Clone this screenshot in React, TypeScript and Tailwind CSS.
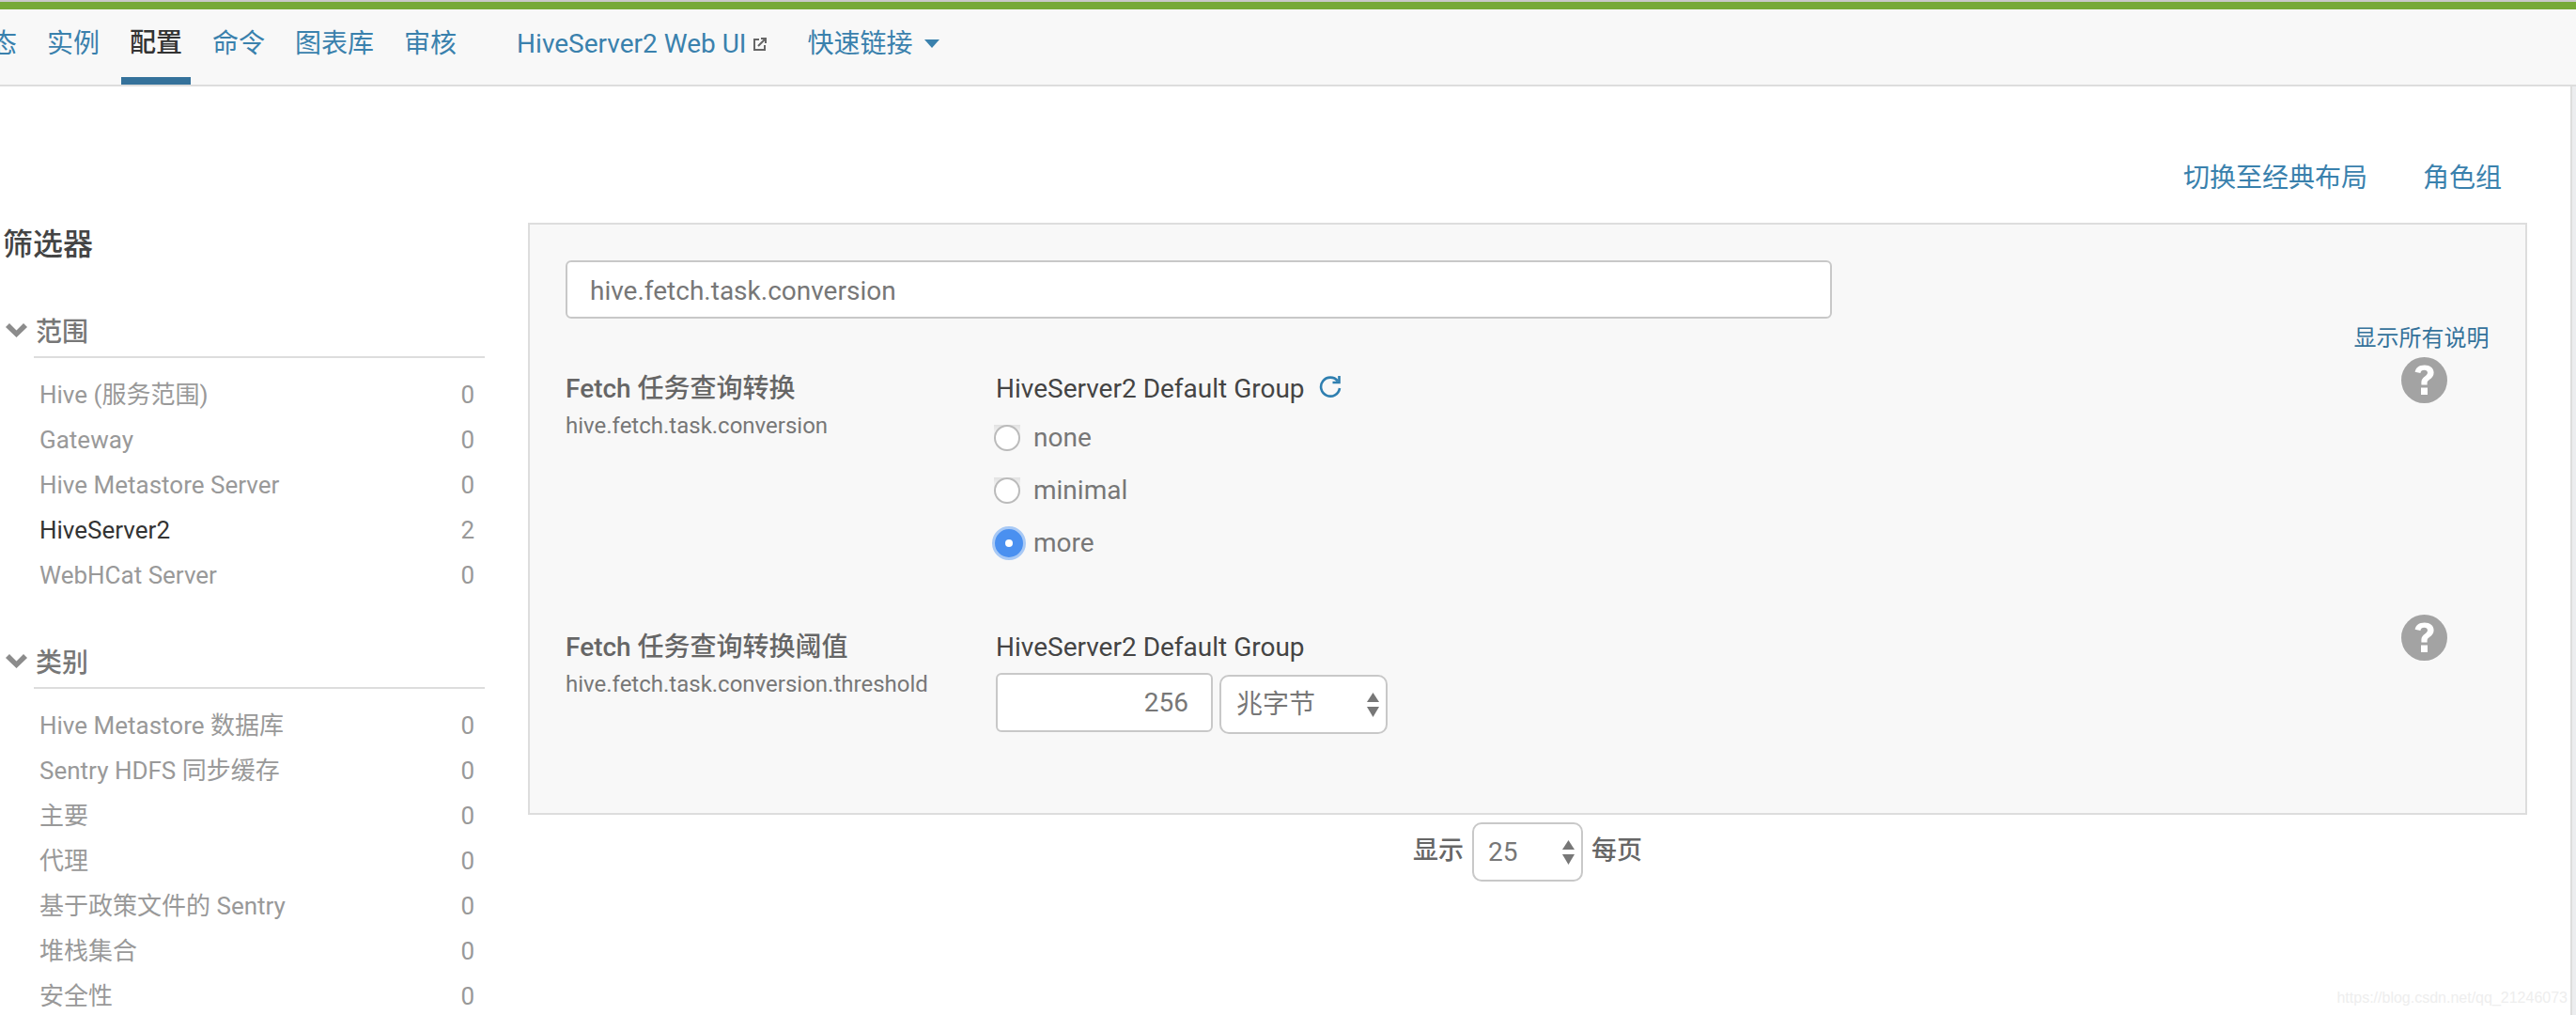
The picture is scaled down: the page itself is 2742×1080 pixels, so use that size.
const scopes: [string, number][] = [
  ["Hive (服务范围)", 0],
  ["Gateway", 0],
  ["Hive Metastore Server", 0],
  ["HiveServer2", 2],
  ["WebHCat Server", 0],
];

const categories: [string, number][] = [
  ["Hive Metastore 数据库", 0],
  ["Sentry HDFS 同步缓存", 0],
  ["主要", 0],
  ["代理", 0],
  ["基于政策文件的 Sentry", 0],
  ["堆栈集合", 0],
  ["安全性", 0],
];

function FilterGroup({ title, items, className }: { title: string; items: [string, number][]; className: string }) {
  return (
    <div className={className}>
      <div className="flex">
        <svg viewBox="0 0 23 15" className="mt-[12px] mr-[7px] h-[15px] w-[23px] shrink-0 fill-[#8c8c8c]">
          <path d="M0 4 L4 0 L11.5 7.5 L19 0 L23 4 L11.5 15 Z" />
        </svg>
        <div className="h-[49px] flex-1 border-b-2 border-[#dddddd] pt-[2px] pl-[2px] text-[28px] leading-[40px] font-medium text-[#777777]">
          {title}
        </div>
      </div>
      <div className="mt-[14px]">
        {items.map(([name, count]) => (
          <div
            key={name}
            className={`flex h-[48px] items-center justify-between pt-[3px] pr-[11px] pl-[36px] text-[26px] ${
              count > 0 ? "text-[#333333]" : "text-[#999999]"
            }`}
          >
            <span>{name}</span>
            <span className="text-[#999999]">{count}</span>
          </div>
        ))}
      </div>
    </div>
  );
}

function SelectArrows() {
  return (
    <svg width="13" height="26" viewBox="0 0 13 26" className="shrink-0 fill-[#777777]">
      <path d="M6.5 0 L13 10 L0 10 Z" />
      <path d="M6.5 26 L13 15 L0 15 Z" />
    </svg>
  );
}

function Radio({ label, checked }: { label: string; checked?: boolean }) {
  return (
    <div className="flex h-[56px] items-center">
      {checked ? (
        <span className="-ml-[4px] mr-[8px] flex h-[36px] w-[36px] shrink-0 items-center justify-center rounded-full border-[3px] border-[#a8c9f5] bg-[#4a90f0]">
          <span className="h-[8px] w-[8px] rounded-full bg-white" />
        </span>
      ) : (
        <span className="-ml-[2px] mr-[14px] h-[28px] w-[28px] shrink-0 bg-[linear-gradient(#e2e2e2,#f8f8f8_40%)]">
          <span className="block h-full w-full rounded-full border-2 border-[#bbbbbb] bg-white" />
        </span>
      )}
      <span className="text-[28px] text-[#777777]">{label}</span>
    </div>
  );
}

function HelpIcon() {
  return (
    <svg viewBox="0 0 49 49" className="h-[49px] w-[49px]">
      <circle cx="24.5" cy="24.5" r="24.5" fill="#a3a3a3" />
      <path
        d="M24.8 8.5 C18.8 8.5 15.4 11.3 14.6 15.8 L20.4 17 C20.8 14.8 22.1 13.7 24.4 13.7 C26.6 13.7 28 14.8 28 16.6 C28 18.2 27 19.1 25.2 20.4 C22.9 22 21.4 23.8 21.4 26.8 V29.5 H27.6 V27.6 C27.6 25.9 28.4 25 30.2 23.7 C32.6 22 34.6 20.2 34.6 16.5 C34.6 11.6 30.6 8.5 24.8 8.5 Z"
        fill="#ffffff"
      />
      <rect x="21" y="32.5" width="7" height="7.5" fill="#ffffff" />
    </svg>
  );
}

export default function App() {
  return (
    <div className="relative flex h-[1080px] w-full flex-col overflow-hidden bg-white font-['Roboto','Noto_Sans_CJK_SC',sans-serif]">
      <div className="h-[2px] shrink-0 bg-[#c9c9c9]" />
      <div className="h-[8px] shrink-0 bg-[#76a937]" />
      <nav className="flex h-[82px] shrink-0 gap-[32px] border-b-2 border-[#dddddd] bg-[#f8f8f8] text-[28px] text-[#3a81ad]">
        <div className="-ml-[38px] flex h-[80px] items-center pb-[7px]">状态</div>
        <div className="flex h-[80px] items-center pb-[7px]">实例</div>
        <div className="-mx-[9px] flex h-[80px] items-center border-b-8 border-[#35729b] px-[9px] font-medium text-[#333333]">
          配置
        </div>
        <div className="flex h-[80px] items-center pb-[7px]">命令</div>
        <div className="flex h-[80px] items-center pb-[7px]">图表库</div>
        <div className="flex h-[80px] items-center pb-[7px]">审核</div>
        <div className="ml-[32px] flex h-[80px] items-center pb-[7px]">
          HiveServer2 Web UI
          <svg viewBox="0 0 16 16" className="ml-[7px] h-[16px] w-[16px] fill-none stroke-[#666666] stroke-2">
            <path d="M7 3 H2 V14 H13 V9" />
            <path d="M6 10 L14 2 M9 2 H14 V7" />
          </svg>
        </div>
        <div className="ml-[10px] flex h-[80px] items-center pb-[7px]">
          快速链接
          <svg viewBox="0 0 16 9" className="ml-[13px] h-[9px] w-[16px] fill-[#3a81ad]">
            <path d="M0 0 H16 L8 9 Z" />
          </svg>
        </div>
      </nav>

      <div className="flex min-h-0 flex-1">
        <div className="flex min-w-0 flex-1">
          <aside className="w-[562px] shrink-0 pt-[148px] pl-[3px]">
            <h2 className="text-[32px] leading-[40px] font-medium text-[#444444]">筛选器</h2>
            <div className="w-[513px]">
              <FilterGroup title="范围" items={scopes} className="mt-[52px] pl-[3px]" />
              <FilterGroup title="类别" items={categories} className="mt-[49px] pl-[3px]" />
            </div>
          </aside>

          <main className="min-w-0 flex-1 pr-[46px]">
            <div className="flex h-[145px] justify-end gap-[59px] pt-[78px] pr-[27px] text-[28px] leading-[40px] text-[#3a81ad]">
              <span>切换至经典布局</span>
              <span>角色组</span>
            </div>

            <section className="h-[630px] border-2 border-[#dddddd] bg-[#f8f8f8] pt-[38px] pl-[38px]">
              <div className="flex h-[62px] w-[1348px] items-center rounded-[6px] border-2 border-[#c8c8c8] bg-white pt-[4px] pl-[24px] text-[28px] text-[#777777]">
                hive.fetch.task.conversion
              </div>

              <div className="flex items-start pr-[28px]">
                <div className="w-[458px] shrink-0 pt-[55px]">
                  <div className="text-[28px] leading-[40px] font-medium text-[#666666]">Fetch 任务查询转换</div>
                  <div className="mt-[3px] text-[24px] leading-[32px] text-[#777777]">hive.fetch.task.conversion</div>
                </div>
                <div className="flex-1 pt-[55px]">
                  <div className="flex items-center text-[28px] leading-[40px] text-[#444444]">
                    HiveServer2 Default Group
                    <svg viewBox="0 0 24 24" className="mb-[6px] ml-[15px] h-[24px] w-[24px] fill-none stroke-[#2f7fb0] stroke-[2.6]">
                      <path d="M20 6.5 A10 10 0 1 0 22 14" />
                      <path d="M21.5 1 V8 H14.5" />
                    </svg>
                  </div>
                  <div className="mt-[4px]">
                    <Radio label="none" />
                    <Radio label="minimal" />
                    <Radio label="more" checked />
                  </div>
                </div>
                <div className="flex w-[160px] shrink-0 flex-col items-center">
                  <div className="mr-[5px] pt-[1px] text-[24px] leading-[40px] text-[#35729b]">显示所有说明</div>
                  <HelpIcon />
                </div>
              </div>

              <div className="mt-[48px] flex items-start pr-[28px]">
                <div className="w-[458px] shrink-0 pt-[15px]">
                  <div className="text-[28px] leading-[40px] font-medium text-[#666666]">Fetch 任务查询转换阈值</div>
                  <div className="mt-[3px] text-[24px] leading-[32px] text-[#777777]">hive.fetch.task.conversion.threshold</div>
                </div>
                <div className="flex-1 pt-[15px]">
                  <div className="text-[28px] leading-[40px] text-[#444444]">HiveServer2 Default Group</div>
                  <div className="mt-[7px] flex items-start gap-[7px]">
                    <div className="flex h-[63px] w-[231px] items-center justify-end rounded-[6px] border-2 border-[#c8c8c8] bg-white pr-[24px] text-[28px] text-[#777777]">
                      256
                    </div>
                    <div className="mt-[2px] flex h-[63px] w-[179px] items-center justify-between rounded-[10px] border-2 border-[#c8c8c8] bg-white pr-[7px] pl-[16px] text-[28px] text-[#777777]">
                      兆字节
                      <SelectArrows />
                    </div>
                  </div>
                </div>
                <div className="flex w-[160px] shrink-0 justify-center">
                  <HelpIcon />
                </div>
              </div>
            </section>

            <div className="mt-[8px] flex items-start justify-center gap-[9px] text-[27px] font-medium text-[#666666]">
              <span className="pt-[10px] leading-[40px]">显示</span>
              <div className="flex h-[63px] w-[118px] items-center justify-between rounded-[10px] border-2 border-[#c8c8c8] bg-white pr-[7px] pl-[15px] text-[28px] font-normal text-[#777777]">
                25
                <SelectArrows />
              </div>
              <span className="pt-[10px] leading-[40px]">每页</span>
            </div>
          </main>
        </div>
        <div className="w-[6px] shrink-0 border-l-2 border-[#dddddd] bg-[#ecedef]" />
      </div>
      <div className="absolute top-[1049px] right-[9px] font-['Liberation_Sans',sans-serif] text-[16px] leading-[26px] text-[#eeeeee]">
        https://blog.csdn.net/qq_21246073
      </div>
    </div>
  );
}
